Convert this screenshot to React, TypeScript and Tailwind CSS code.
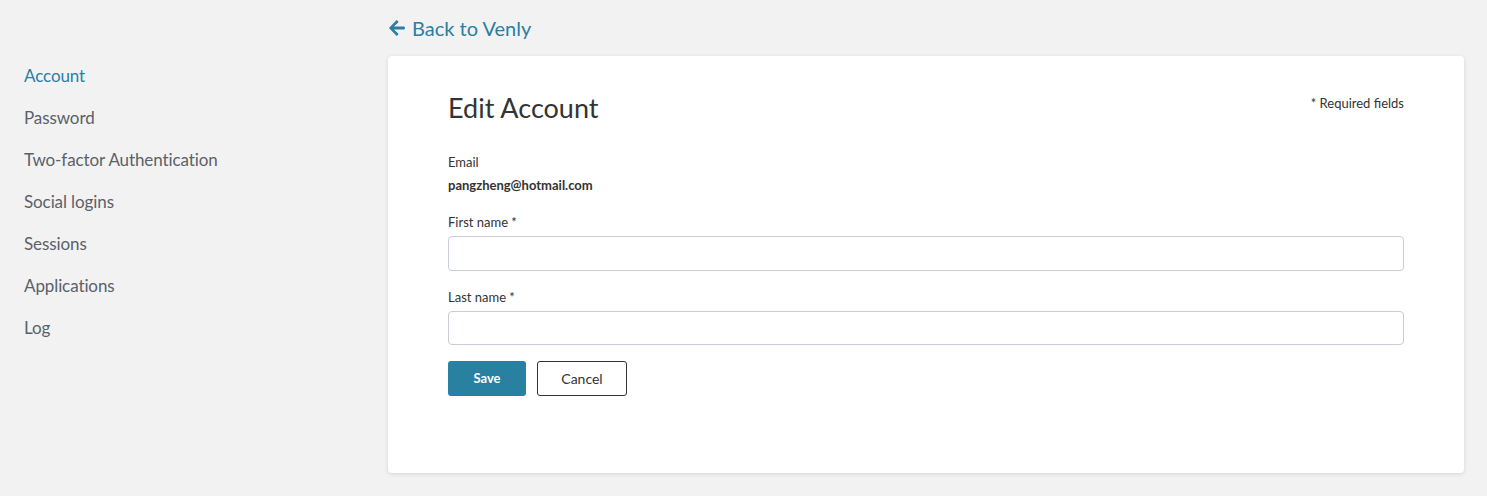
import { FaArrowLeft } from "react-icons/fa";

const navItems = [
  "Account",
  "Password",
  "Two-factor Authentication",
  "Social logins",
  "Sessions",
  "Applications",
  "Log",
];

export default function App() {
  return (
    <div
      className="flex min-h-[496px] w-full bg-[#f2f2f2] text-[#333]"
      style={{ fontFamily: "Lato, 'Open Sans', sans-serif" }}
    >
      <aside className="w-[388px] shrink-0 pl-6 pt-[63px]">
        <ul className="flex flex-col">
          {navItems.map((item, i) => (
            <li
              key={item}
              className={`h-[42px] text-[17px] leading-[26px] tracking-[-0.1px] ${
                i === 0 ? "text-[#2a7ea3]" : "text-[#5a6169]"
              }`}
            >
              {item}
            </li>
          ))}
        </ul>
      </aside>

      <main className="flex flex-col pt-[15px]">
        <a className="flex h-[26px] items-center gap-[6px] text-[20px] text-[#2a7ea3]">
          <FaArrowLeft className="h-[18px] w-[18px]" />
          <span>Back to Venly</span>
        </a>

        <div className="mt-[15px] w-[1076px] rounded-[4px] bg-white px-[60px] pb-[77px] pt-[36px] shadow-[0_1px_4px_rgba(0,0,0,0.12)]">
          <div className="flex items-start justify-between">
            <h1 className="text-[27px] leading-[32px] text-[#333]">Edit Account</h1>
            <span className="pt-[2px] text-[13px] text-[#333]">* Required fields</span>
          </div>

          <div className="mt-[29px] text-[13px] leading-[18px]">Email</div>
          <div className="mt-[5px] text-[13px] font-bold leading-[18px]">pangzheng@hotmail.com</div>

          <label className="mt-[19px] block text-[13px] leading-[18px]">First name *</label>
          <input className="mt-[5px] block h-[35px] w-full rounded-[4px] border border-[#c9cdd4] outline-none" />

          <label className="mt-[17px] block text-[13px] leading-[18px]">Last name *</label>
          <input className="mt-[5px] block h-[34px] w-full rounded-[4px] border border-[#c9cdd4] outline-none" />

          <div className="mt-[16px] flex gap-[11px]">
            <button className="h-[35px] w-[78px] rounded-[3px] bg-[#2981a1] text-[13px] font-bold text-white">
              Save
            </button>
            <button className="h-[35px] w-[90px] rounded-[3px] border border-[#333] bg-white text-[14px] text-[#333]">
              Cancel
            </button>
          </div>
        </div>
      </main>
    </div>
  );
}
